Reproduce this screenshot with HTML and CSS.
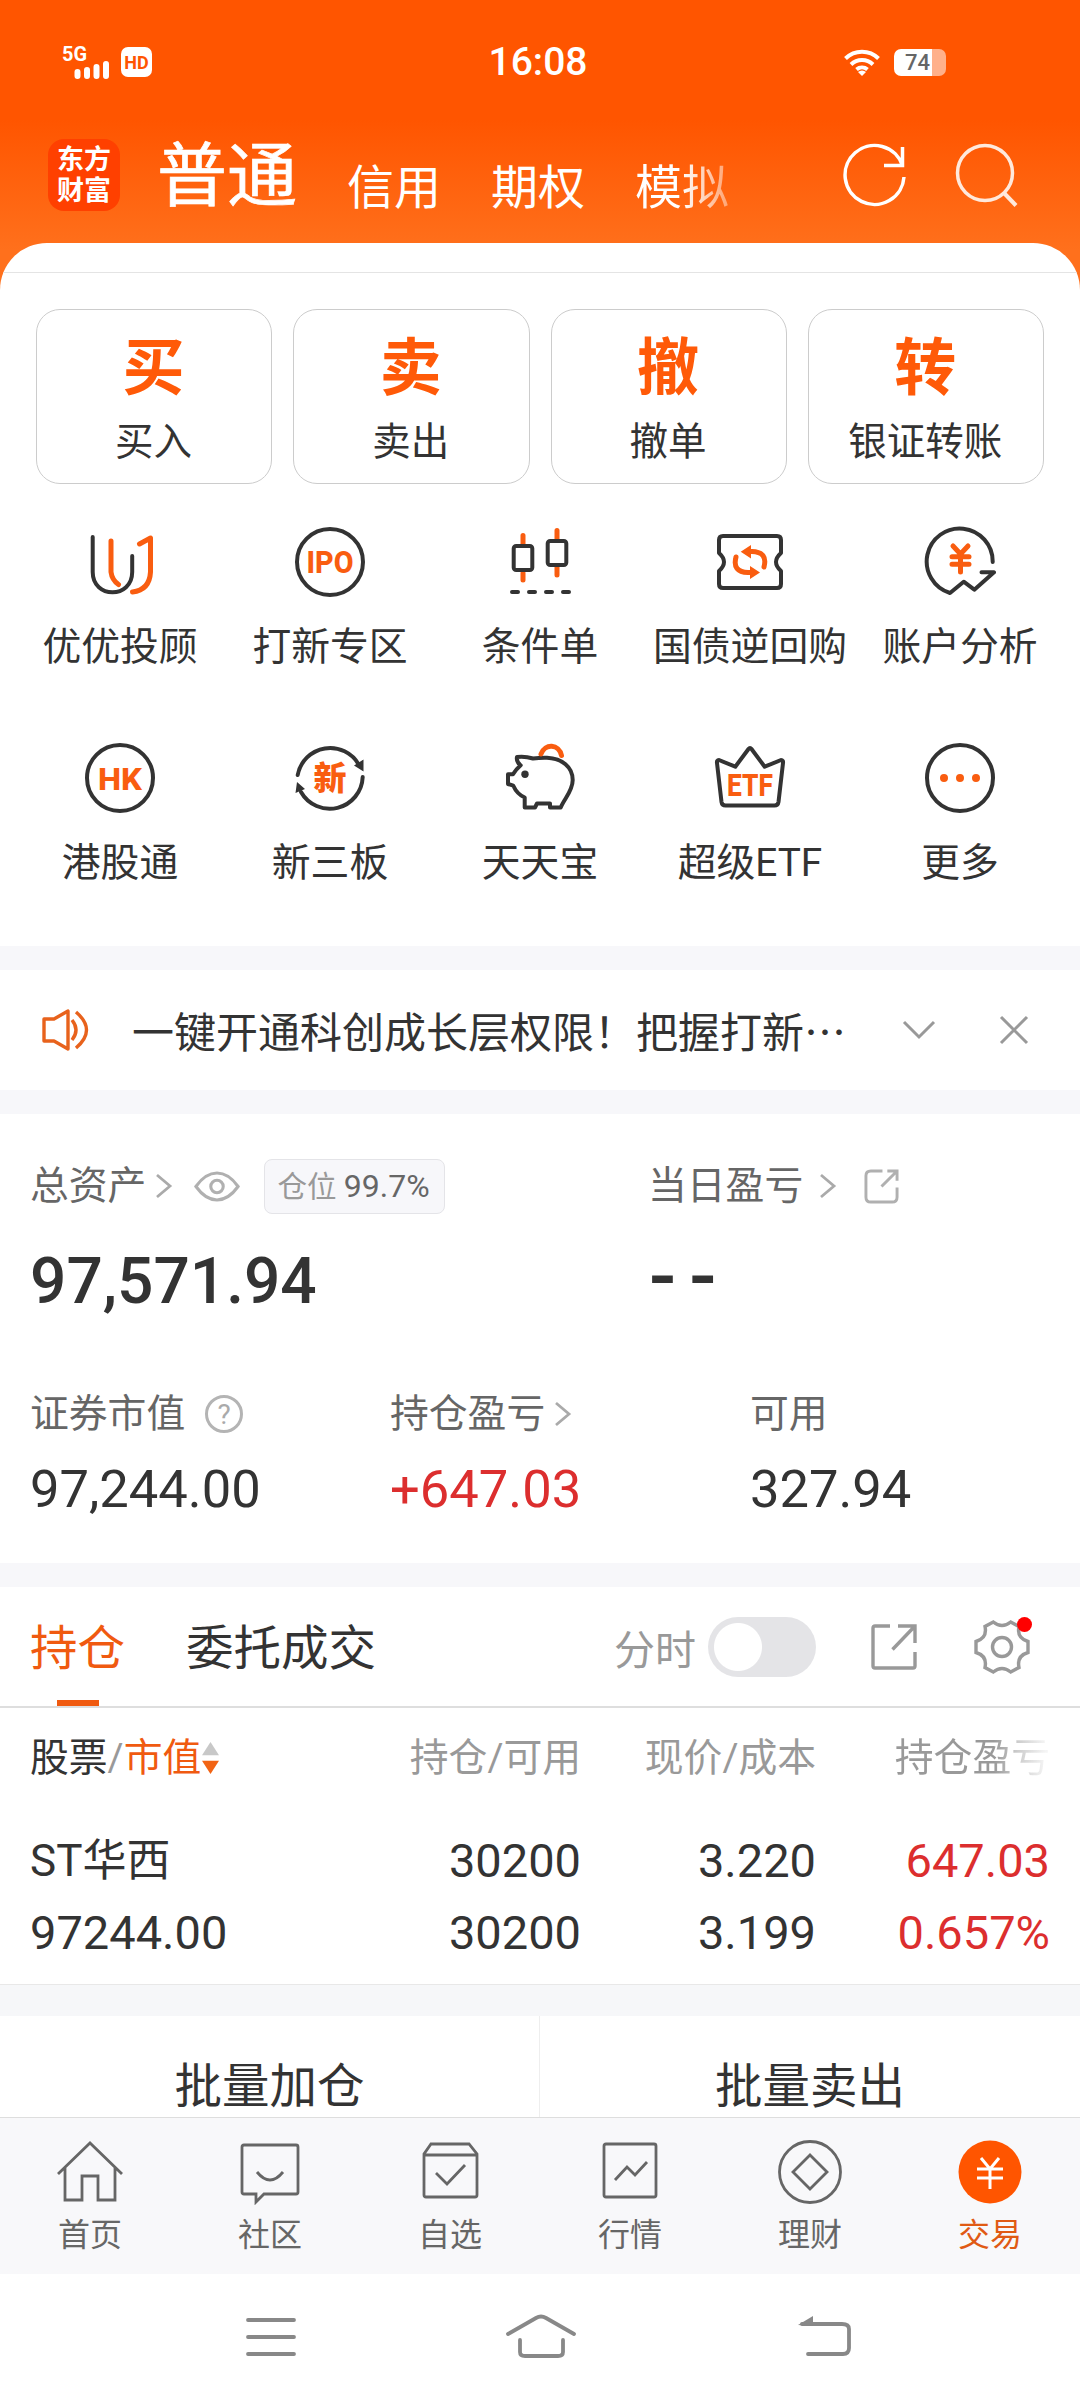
FILE: index.html
```html
<!DOCTYPE html>
<html lang="zh-CN">

<head>
    <meta charset="UTF-8">
    <meta name="viewport" content="width=device-width, initial-scale=1.0">
    <title>交易</title>
    <link rel="stylesheet" href="styles.css">
</head>

<body>
    <header class="top">
        <div class="status">
            <div class="status-left">
                <svg width="50" height="46" viewBox="0 -6 50 46">
                    <text x="0" y="16" class="net" textLength="25" lengthAdjust="spacingAndGlyphs">5G</text>
                    <path d="M15.500 31v-4M25 31v-6M34.500 31v-9M44 31v-12" stroke="#fff" stroke-width="6" stroke-linecap="round" />
                </svg>
                <span class="hd">HD</span>
            </div>
            <div class="clock">16:08</div>
            <div class="status-right">
                <svg width="36" height="28" viewBox="0 0 36 28" fill="none" stroke="#fff" stroke-width="4">
                    <path d="M1.500 10.500a23.500 23.500 0 0 1 33 0M7 16.500a16 16 0 0 1 22 0M12.500 21.500a8.500 8.500 0 0 1 11 0" />
                    <path d="M14 24l4 4 4-4a6 6 0 0 0-8 0z" fill="#fff" stroke="none" />
                </svg>
                <div class="battery">74</div>
            </div>
        </div>
        <nav class="accounts">
            <div class="logo">东方<br>财富</div>
            <span class="account on">普通</span>
            <span class="account">信用</span>
            <span class="account">期权</span>
            <span class="account fade">模拟</span>
            <svg class="refresh" width="66" height="68" viewBox="0 0 66 68" fill="none" stroke="#fff" stroke-width="3.500">
                <path d="M63 34A29.500 29.500 0 1 1 61.500 22.500M61.500 4v18.500H43" />
            </svg>
            <svg width="66" height="68" viewBox="0 0 66 68" fill="none" stroke="#ffe9dc" stroke-width="3.500">
                <circle cx="31" cy="30" r="27.500" />
                <path d="M50 50l12 12.500" stroke-width="4" />
            </svg>
        </nav>
    </header>

    <main class="sheet">
        <section class="trade">
            <div class="trade-btn"><b>买</b><span>买入</span></div>
            <div class="trade-btn"><b>卖</b><span>卖出</span></div>
            <div class="trade-btn"><b>撤</b><span>撤单</span></div>
            <div class="trade-btn"><b>转</b><span>银证转账</span></div>
        </section>

        <section class="menu">
            <div class="menu-item">
                <svg class="ico" viewBox="0 0 72 72">
                    <path d="M8.700 11v35c0 27 39.500 27 39.500 0V30" />
                    <path class="o" d="M27 15v31q1 8 7.500 12.500M55.500 18l11-6v34q-1 18-18 20" />
                </svg>
                <span>优优投顾</span>
            </div>
            <div class="menu-item">
                <svg class="ico" viewBox="0 0 72 72">
                    <circle cx="36" cy="36" r="33" />
                    <text x="36" y="47" textLength="47" lengthAdjust="spacingAndGlyphs" class="ipo">IPO</text>
                </svg>
                <span>打新专区</span>
            </div>
            <div class="menu-item">
                <svg class="ico" viewBox="0 0 72 72">
                    <path class="o" d="M19 9.500v9M19 47v7M53 4.500v9M53 41v8" />
                    <rect x="9.700" y="20" width="18.600" height="24" rx="2.500" />
                    <rect x="43.700" y="15" width="18.600" height="24" rx="2.500" />
                    <path d="M8 66h6M25 66h6M42 66h6M59 66h6" />
                </svg>
                <span>条件单</span>
            </div>
            <div class="menu-item">
                <svg class="ico" viewBox="0 0 72 72">
                    <path d="M9 10h54q4 0 4 4v13q-10 9 0 18v13q0 4-4 4H9q-4 0-4-4V45q10-9 0-18V14q0-4 4-4z" />
                    <path class="o" d="M22 31q-4 15 12 15.500h3M50 41q4-15-12-15.500h-3" />
                    <path class="f" d="M26.700 25.700L37 19v13.500zM46 46.500L36 53V40z" />
                </svg>
                <span>国债逆回购</span>
            </div>
            <div class="menu-item">
                <svg class="ico" viewBox="0 0 72 72">
                    <path d="M68.700 36A33 33 0 1 0 26 67L39.700 55.700l10.600 8L70 46.300H57.500" />
                    <path class="o" d="M29 20l7.500 8 7.500-8M36.500 28v18M28 30.700h17M28 38.300h17" />
                </svg>
                <span>账户分析</span>
            </div>
            <div class="menu-item">
                <svg class="ico" viewBox="0 0 72 72">
                    <circle cx="36" cy="36" r="33" />
                    <text x="36" y="47.500" textLength="44" lengthAdjust="spacingAndGlyphs" class="ipo">HK</text>
                </svg>
                <span>港股通</span>
            </div>
            <div class="menu-item">
                <svg class="ico" viewBox="0 0 72 72">
                    <path d="M3.700 33A33 33 0 0 1 65 23M68.700 35A33 33 0 0 1 7 50" />
                    <path class="k" d="M60 23.500l9.500 6v-12zM3 40l-1.500 11 9.500-4z" />
                    <text x="36" y="48" class="xin">新</text>
                </svg>
                <span>新三板</span>
            </div>
            <div class="menu-item">
                <svg class="ico" viewBox="0 0 72 72">
                    <path d="M13 15q8-1 16 1.500 7-1 14-.8c15 .8 25.700 9 25.700 22.300 0 11-8 18-12 27.500H46v-4H33l-2 4H20.700V55.500Q13 52 9.300 43.700L4 42v-9.700h5q3-5 7.700-9Q12 20 13 15z" />
                    <path class="o" d="M37 12c4-11 18-10 20.500 1.500" />
                    <circle class="k" cx="21" cy="32.300" r="3.700" />
                </svg>
                <span>天天宝</span>
            </div>
            <div class="menu-item">
                <svg class="ico" viewBox="0 0 72 72">
                    <path d="M5 18l16.300 6.700L34.500 7q1.500-2 3 0l13.200 17.700L67 18q2.500 0 2 3l-4.500 39q-.5 3.500-4 3.500h-49q-3.500 0-4-3.500L3 21q-.5-3 2-3z" />
                    <text x="36" y="53.500" textLength="46" lengthAdjust="spacingAndGlyphs" class="ipo">ETF</text>
                </svg>
                <span>超级ETF</span>
            </div>
            <div class="menu-item">
                <svg class="ico" viewBox="0 0 72 72">
                    <circle cx="36" cy="36" r="33" />
                    <path class="f" d="M16 36a4 4 0 1 0 8 0 4 4 0 1 0-8 0M32 36a4 4 0 1 0 8 0 4 4 0 1 0-8 0M48 36a4 4 0 1 0 8 0 4 4 0 1 0-8 0" />
                </svg>
                <span>更多</span>
            </div>
        </section>

        <section class="notice">
            <svg width="50" height="44" viewBox="0 0 50 44" fill="none" stroke="#e8621c" stroke-width="3.400">
                <path d="M3 11h10L27 3v38L13 33H3zM31 12q8 10 0 20M35 4q21 18 0 36" stroke-linejoin="round" />
            </svg>
            <p>一键开通科创成长层权限！把握打新⋯</p>
            <svg width="34" height="22" viewBox="0 0 34 22" class="line"><path d="M2 3l15 15L32 3" /></svg>
            <svg class="close" width="30" height="30" viewBox="0 0 30 30"><path d="M2 2l26 26M28 2L2 28" /></svg>
        </section>

        <section class="assets">
            <div class="asset-top">
                <div class="total">
                    <div class="label">
                        <span>总资产</span>
                        <svg class="arrow" viewBox="0 0 18 26"><path d="M2 2l13 11L2 24" /></svg>
                        <svg class="eye" viewBox="0 0 48 32"><path d="M2 16Q12 2 24 2t22 14Q36 30 24 30T2 16z" /><circle cx="24" cy="16" r="6.500" /></svg>
                        <span class="badge">仓位 <em>99.7%</em></span>
                    </div>
                    <div class="big">97,571.94</div>
                </div>
                <div class="today">
                    <div class="label">
                        <span>当日盈亏</span>
                        <svg class="arrow" viewBox="0 0 18 26"><path d="M2 2l13 11L2 24" /></svg>
                        <svg class="share" viewBox="0 0 36 36"><path d="M19 2H7Q2 2 2 7v22q0 5 5 5h22q5 0 5-5V19M24 2h10v10M34 2L18 18" /></svg>
                    </div>
                    <div class="big dashes">--</div>
                </div>
            </div>
            <div class="asset-row">
                <div>
                    <div class="label"><span>证券市值</span><i class="help">?</i></div>
                    <div class="num">97,244.00</div>
                </div>
                <div>
                    <div class="label"><span>持仓盈亏</span><svg class="arrow" viewBox="0 0 18 26"><path d="M2 2l13 11L2 24" /></svg></div>
                    <div class="num red">+647.03</div>
                </div>
                <div>
                    <div class="label"><span>可用</span></div>
                    <div class="num">327.94</div>
                </div>
            </div>
        </section>

        <section class="holdings">
            <div class="tabs">
                <span class="tab on">持仓</span>
                <span class="tab">委托成交</span>
                <span class="minute">分时</span>
                <span class="toggle"></span>
                <svg class="open" width="48" height="48" viewBox="0 0 48 48"><path d="M20 3H5q-2 0-2 2v38q0 2 2 2h38q2 0 2-2V29M28 3h17v17M45 3L22.500 26.500" /></svg>
                <div class="gear">
                    <svg width="58" height="58" viewBox="0 0 58 58">
                        <path d="M3 23.500q11.500-3.500 9-15l8.300-4.500q8.700 7 17.400 0l8.300 4.500q-2.500 11.500 9 15v11q-11.500 3.500-9 15l-8.300 4.500q-8.700-7-17.400 0l-8.300-4.500q2.500-11.500-9-15z" />
                        <circle cx="29" cy="29" r="9.500" />
                    </svg>
                </div>
            </div>
            <div class="table">
                <div class="row head">
                    <span><b>股票</b>/<em>市值</em><svg class="sort" viewBox="0 0 18 34"><path d="M9 0l9 14H0z" fill="#c8c8c8" /><path d="M9 34l9-14H0z" fill="#f26414" /></svg></span>
                    <span>持仓/可用</span>
                    <span>现价/成本</span>
                    <span class="cut">持仓盈亏</span>
                </div>
                <div class="row first">
                    <span class="name">ST华西</span>
                    <span>30200</span>
                    <span>3.220</span>
                    <span class="red">647.03</span>
                </div>
                <div class="row">
                    <span>97244.00</span>
                    <span>30200</span>
                    <span>3.199</span>
                    <span class="red">0.657%</span>
                </div>
            </div>
        </section>

        <section class="batch">
            <div>批量加仓</div>
            <div>批量卖出</div>
        </section>
    </main>

    <footer>
        <nav class="tabbar">
            <div class="tabbar-item">
                <svg viewBox="0 0 66 66"><path d="M1 35L33 4l32 31M8 29v32h17V37h16v24h17V29" /></svg>
                <span>首页</span>
            </div>
            <div class="tabbar-item">
                <svg viewBox="0 0 66 66"><path d="M7 6h52q2 0 2 2v45q0 2-2 2H27l-8 8v-8H7q-2 0-2-2V8q0-2 2-2zM20 33q13 16 26 0" /></svg>
                <span>社区</span>
            </div>
            <div class="tabbar-item">
                <svg viewBox="0 0 66 66"><path d="M14 5h38l8 10v41q0 2-2 2H9q-2 0-2-2V15zM7 16h53M19 34l11 11 18-19" /></svg>
                <span>自选</span>
            </div>
            <div class="tabbar-item">
                <svg viewBox="0 0 66 66"><path d="M9 5h48q2 0 2 2v49q0 2-2 2H9q-2 0-2-2V7q0-2 2-2zM18 41l12-13 8 8 12-13" /></svg>
                <span>行情</span>
            </div>
            <div class="tabbar-item">
                <svg viewBox="0 0 66 66"><circle cx="33" cy="33" r="30.500" /><path d="M33 16l17 17-17 17-17-17z" /></svg>
                <span>理财</span>
            </div>
            <div class="tabbar-item on">
                <svg viewBox="0 0 66 66"><circle class="disc" cx="33" cy="33" r="31.500" /><path class="yen" d="M24 19l9 11 9-11M33 30v20M20 30h26M20 39h26" /></svg>
                <span>交易</span>
            </div>
        </nav>
        <nav class="sysbar">
            <svg viewBox="0 0 72 46"><path d="M13 6h46M13 23h46M13 40h46" /></svg>
            <svg class="home" viewBox="0 0 72 46"><path d="M3 20L31 4q5-3 10 0l28 16M15 26v12q0 4 5 4h33q5 0 5-4V26" /></svg>
            <svg viewBox="0 0 72 46"><path d="M14 10h40q7 0 7 5v19q0 6-6 6H20" /><path class="tip" d="M10 11L25 2v10z" /></svg>
        </nav>
    </footer>
</body>

</html>
```
FILE: styles.css
```css
* {
  margin: 0;
  padding: 0;
  box-sizing: border-box;
}

body {
  width: 1080px;
  height: 2400px;
  overflow: hidden;
  background: #fff;
  color: #333;
  font-family: Roboto, "Noto Sans CJK SC", sans-serif;
  display: flex;
  flex-direction: column;
}

svg {
  display: block;
  flex: none;
}

em,
i {
  font-style: normal;
}

.red {
  color: #dc2e2e;
}

/* header */
.top {
  height: 290px;
  flex: none;
  color: #fff;
  background: linear-gradient(#ff5500 120px, #ff701c 250px);
}

.status {
  height: 124px;
  padding: 0 134px 0 62px;
  display: grid;
  grid-template-columns: 426px 100px 1fr;
  align-items: center;
}

.status-left,
.status-right {
  display: flex;
  align-items: center;
}

.status-left {
  gap: 9px;
}

.net {
  font: 700 20px Roboto;
  fill: #fff;
}

.hd {
  width: 31px;
  height: 30px;
  border-radius: 7px;
  background: #fff;
  color: #ff5500;
  font-size: 18px;
  font-weight: 700;
  line-height: 31px;
  text-align: center;
}

.clock {
  font-size: 39px;
  font-weight: 500;
  text-align: center;
  white-space: nowrap;
}

.status-right {
  justify-content: flex-end;
  gap: 14px;
}

.battery {
  width: 52px;
  height: 27px;
  border-radius: 7px;
  background: linear-gradient(90deg, #fff 38px, #ffb08a 38px);
  color: #666;
  font-size: 22px;
  font-weight: 500;
  line-height: 28px;
  padding-left: 11px;
}

.accounts {
  height: 106px;
  padding-left: 48px;
  display: flex;
  align-items: center;
}

.logo {
  width: 72px;
  height: 72px;
  border-radius: 16px;
  background: #ff4000;
  font-size: 27px;
  font-weight: 700;
  line-height: 31px;
  text-align: center;
  padding-top: 6px;
  margin: -4px 37px 0 0;
}

.account {
  font-size: 47px;
  line-height: 60px;
  margin: 21px 50px 0 0;
}

.account.on {
  font-size: 70px;
  font-weight: 400;
  -webkit-text-stroke: .7px #fff;
  margin: 0 50px 0 0;
}

.account.fade {
  margin-right: 112px;
  background: linear-gradient(90deg, #fff 50%, rgba(255, 255, 255, .4));
  -webkit-background-clip: text;
  background-clip: text;
  color: transparent;
}

.refresh {
  margin-right: 47px;
}

/* white sheet */
.sheet {
  height: 1874px;
  flex: none;
  margin-top: -47px;
  border-radius: 47px 47px 0 0;
  overflow: hidden;
  background: #fff;
}

.trade {
  margin-top: 29px;
  border-top: 1px solid #e4e4e4;
  padding: 36px 36px 0;
  display: grid;
  grid-template-columns: repeat(4, 1fr);
  gap: 21px;
}

.trade-btn {
  height: 175px;
  border: 1px solid #ccc;
  border-radius: 24px;
  display: flex;
  flex-direction: column;
  align-items: center;
}

.trade-btn b {
  color: #ff5a08;
  font-size: 62px;
  line-height: 70px;
  margin: 24px 1px 0 0;
}

.trade-btn span {
  font-size: 38.5px;
  line-height: 56px;
  margin: 10px 1px 0 0;
}

.menu {
  height: 462px;
  padding: 42px 15px 0;
  display: grid;
  grid-template-columns: repeat(5, 1fr);
  grid-auto-rows: 216px;
}

.menu-item {
  display: flex;
  flex-direction: column;
  align-items: center;
  font-size: 38.8px;
  line-height: 56px;
  white-space: nowrap;
}

.ico {
  width: 72px;
  height: 72px;
  margin-bottom: 21px;
  fill: none;
  stroke: #333;
  stroke-width: 4;
  stroke-linejoin: round;
  stroke-linecap: round;
}

.ico .o {
  stroke: #f95d10;
  stroke-width: 5;
}

.ico .f {
  fill: #f95d10;
  stroke: none;
}

.ico .k {
  fill: #333;
  stroke: none;
}

.ico text {
  fill: #f95d10;
  stroke: none;
  text-anchor: middle;
}

.ipo {
  font: 800 31px Roboto;
}

.xin {
  font: 900 33px "Noto Sans CJK SC";
}

.notice {
  height: 168px;
  border: solid #f7f7fa;
  border-width: 24px 0;
  padding: 0 51px 0 41px;
  display: flex;
  align-items: center;
}

.notice p {
  width: 769px;
  padding-left: 41px;
  margin-right: 42px;
  font-family: "Noto Sans CJK SC", sans-serif;
  font-size: 42px;
  line-height: 60px;
  white-space: nowrap;
}

.notice .line,
.notice .close {
  fill: none;
  stroke: #999;
  stroke-width: 3;
}

.notice .close {
  margin-left: auto;
}

/* assets */
.assets {
  height: 473px;
  border-bottom: 24px solid #f7f7fa;
  padding-left: 30px;
}

.asset-top {
  height: 228px;
  padding-top: 44px;
  display: flex;
}

.total {
  width: 618px;
}

.label {
  height: 56px;
  display: flex;
  align-items: center;
  color: #666;
  font-size: 38.8px;
  line-height: 56px;
}

.arrow {
  width: 18px;
  height: 26px;
  margin-left: 9px;
  fill: none;
  stroke: #aaa;
  stroke-width: 2.800;
}

.today .arrow {
  margin-left: 16px;
}

.eye {
  width: 46px;
  height: 31px;
  margin-left: 21px;
  fill: none;
  stroke: #b0b0b0;
  stroke-width: 3.200;
}

.badge {
  width: 181px;
  height: 55px;
  margin-left: 24px;
  border: 1px solid #e4e4e8;
  border-radius: 8px;
  background: #f7f7fa;
  color: #999;
  font-size: 29.5px;
  line-height: 52px;
  padding-left: 12px;
  white-space: nowrap;
}

.badge em {
  color: #666;
  font-size: 32px;
}

.share {
  width: 35px;
  height: 35px;
  margin-left: 27px;
  fill: none;
  stroke: #b0b0b0;
  stroke-width: 3;
}

.big {
  font-size: 64px;
  font-weight: 500;
  line-height: 76px;
  margin-top: 30px;
}

.dashes {
  font-size: 80px;
  letter-spacing: 13px;
  margin: 25px 0 0 1px;
}

.asset-row {
  margin-top: 44px;
  display: grid;
  grid-template-columns: 360px 360px 1fr;
}

.help {
  width: 38px;
  height: 38px;
  margin-left: 20px;
  border: 3px solid #b4b4b4;
  border-radius: 50%;
  color: #aaa;
  font-size: 28px;
  line-height: 33px;
  text-align: center;
}

.num {
  font-size: 52.5px;
  line-height: 60px;
  margin-top: 17px;
}

/* holdings */
.tabs {
  height: 121px;
  border-bottom: 2px solid #dedede;
  padding: 0 49px 0 30px;
  display: flex;
  align-items: center;
}

.tab {
  font-size: 47.500px;
  line-height: 127px;
  height: 121px;
  margin-right: 61px;
}

.tab.on {
  color: #f05a10;
  background: linear-gradient(#f05a10, #f05a10) 27px 114px / 42px 6px no-repeat;
}

.minute {
  margin-left: auto;
  color: #999;
  font-size: 41px;
}

.toggle {
  width: 108px;
  height: 60px;
  margin-left: 12px;
  border-radius: 30px;
  background: radial-gradient(circle at 30px 30px, #fff 23.5px, #e4e4e7 24.5px);
}

.open,
.gear {
  fill: none;
  stroke: #999;
  stroke-width: 3.400;
}

.open {
  margin-left: 54px;
}

.gear {
  position: relative;
  margin-left: 55px;
}

.gear::after {
  content: "";
  position: absolute;
  right: -1px;
  top: -1px;
  width: 15px;
  height: 15px;
  border-radius: 50%;
  background: #f00;
}

.table {
  height: 277px;
  border-bottom: 1px solid #e8e8e8;
  padding: 14px 30px 0;
}

.row {
  height: 72px;
  display: grid;
  grid-template-columns: 1fr 280px 235px 234px;
  font-size: 47px;
  line-height: 72px;
  text-align: right;
}

.row span:first-child {
  text-align: left;
}

.row.first {
  margin-top: 31px;
}

.row .name {
  font-size: 44px;
}

.head {
  font-size: 38.800px;
  color: #999;
}

.head b {
  font-weight: 400;
  color: #333;
}

.head em {
  color: #f05a10;
}

.head > span:first-child {
  display: flex;
  align-items: center;
}

.sort {
  width: 17px;
  height: 34px;
  margin-left: 1px;
}

.cut {
  background: linear-gradient(90deg, #999 76%, rgba(153, 153, 153, .5) 86%, rgba(153, 153, 153, .1) 98%);
  -webkit-background-clip: text;
  background-clip: text;
  color: transparent;
}

.batch {
  border-top: 31px solid #f6f7f9;
  display: grid;
  grid-template-columns: 1fr 1fr;
  font-size: 47.500px;
  line-height: 142px;
  text-align: center;
}

.batch div:first-child {
  border-right: 1px solid #eee;
}

/* bottom */
.tabbar {
  height: 157px;
  border-top: 1px solid #dedede;
  background: #f8f8fa;
  display: grid;
  grid-template-columns: repeat(6, 1fr);
}

.tabbar-item {
  display: flex;
  flex-direction: column;
  align-items: center;
  padding-top: 21px;
  color: #666;
  font-size: 32px;
  line-height: 44px;
}

.tabbar-item svg {
  width: 66px;
  height: 66px;
  margin-bottom: 8px;
  fill: none;
  stroke: #666;
  stroke-width: 2.800;
}

.tabbar-item.on {
  color: #e05a14;
}

.tabbar-item .disc {
  fill: #ff5500;
  stroke: none;
}

.tabbar-item .yen {
  stroke: #fff;
  stroke-width: 3;
}

.sysbar {
  height: 126px;
  padding: 40px 0 0 235px;
  display: flex;
}

.sysbar svg {
  width: 72px;
  height: 46px;
  fill: none;
  stroke: #888;
  stroke-width: 3.800;
  stroke-linecap: round;
}

.sysbar .home {
  margin: 0 211px 0 198px;
}

.sysbar .tip {
  fill: #888;
  stroke: none;
}
```
